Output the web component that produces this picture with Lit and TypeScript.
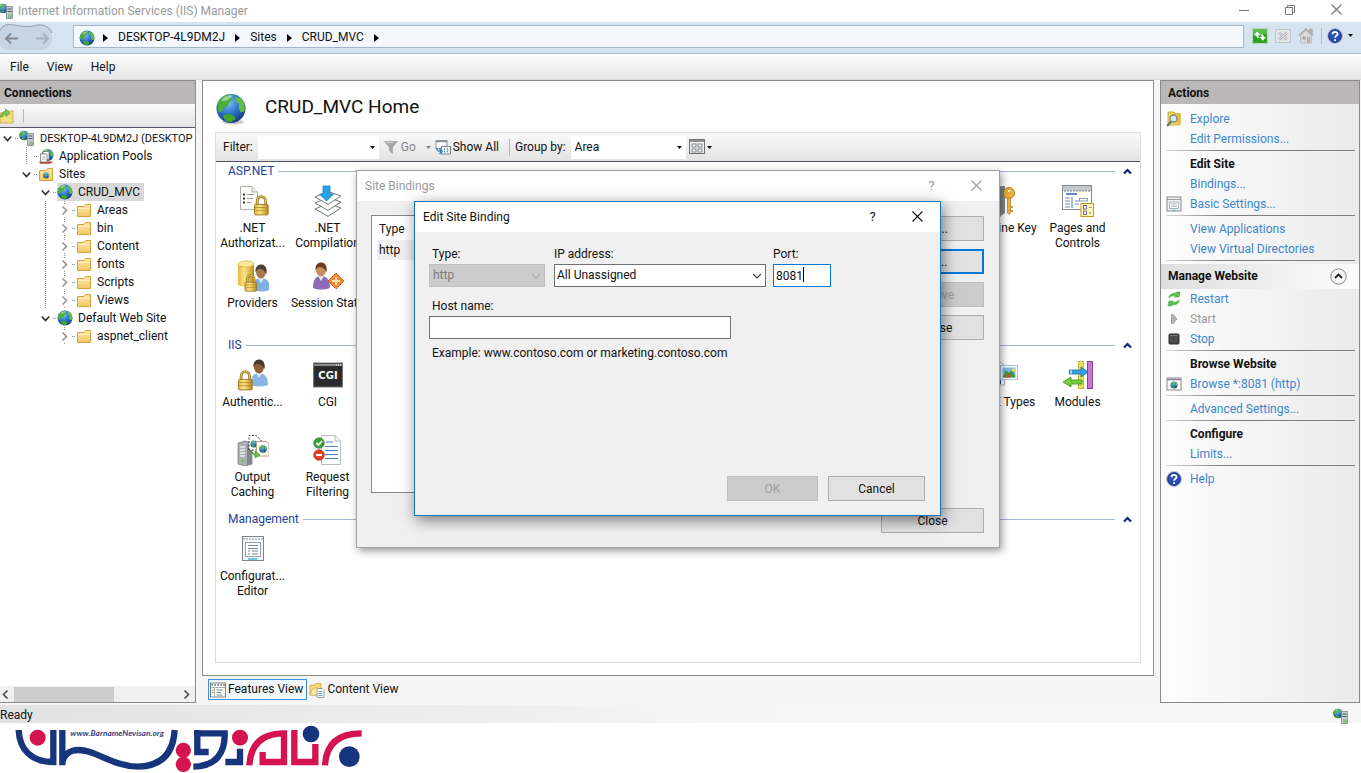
import { LitElement, html, svg, css, nothing, TemplateResult } from "lit";
import { customElement, property } from "lit/decorators.js";
import { classMap } from "lit/directives/class-map.js";

/* ---------- icon artwork ---------- */

const globe = (cx: number, cy: number, r: number) => svg`
  <g transform="translate(${cx} ${cy}) scale(${r / 8})">
    <circle r="8" fill="url(#sea)"/>
    <path d="M-7.4-3C-6-6-3-8 0-7.8L-.6-6.2 1.4-5.6-.6-3.6-2-1.2-4-.2-5.4 2.2-7 1.6Z" fill="#4cae3c"/>
    <path d="M2.6-6.4 5.4-5.8 7.4-2.6 7.6 1.4 5.6 2.4 4.2.2 4.4-2.6 2.4-4.2Z" fill="#5fbf3f"/>
    <path d="M-4.6 4 -1.6 2.6 1.6 4 2.6 5.8 0 7.6-3 7Z" fill="#43a52f"/>
    <path d="M-5.4-4.4A7 7 0 0 1 1-7.2C-.6-5.2-3-3.6-5.4-4.4Z" fill="#fff" opacity=".45"/>
  </g>`;

const lock = (x: number, y: number, s = 1) => svg`
  <g transform="translate(${x} ${y}) scale(${s})">
    <path d="M3 8V5a4 4.500 0 0 1 8 0V8" fill="none" stroke="#9a7a1c" stroke-width="2.600"/>
    <path d="M3 8V5a4 4.500 0 0 1 8 0V8" fill="none" stroke="#e7cf74" stroke-width="1"/>
    <rect x=".5" y="8" width="13" height="10" rx="1" fill="url(#gold)" stroke="#8d6a12" stroke-width=".8"/>
    <path d="M1 11H13M1 14H13" stroke="#a8811e" stroke-width=".7"/>
  </g>`;

const person = (x: number, y: number, shirt: string, hair: string, skin: string) => svg`
  <g transform="translate(${x} ${y})">
    <path d="M0 26C0 17 3 14 8 14S17 17 17 26C11 28 5 28 0 26Z" fill="${shirt}"/>
    <path d="M5 14 8 19 11 14Z" fill="#e8eef8"/>
    <ellipse cx="8" cy="8" rx="5" ry="6.500" fill="${skin}"/>
    <path d="M2.500 8C2 2 6 0 9 .5S14.500 4 13.500 10C12 7 10 5 6 5 4 5.500 3.500 7 2.500 8Z" fill="${hair}"/>
  </g>`;

const tower = (x: number, y: number) => svg`
  <g transform="translate(${x} ${y})">
    <path d="M0 2 7 0 14 2V23L7 25 0 23Z" fill="#a9b0b4" stroke="#6e767b" stroke-width=".7"/>
    <path d="M9 3.500 14 2V23L9 24.500Z" fill="#7f888e"/>
    <path d="M2 6H7M2 9H7M2 12H7M2 15H7" stroke="#e9eef0" stroke-width="1.300"/>
    <circle cx="4.500" cy="20" r="1.300" fill="#69d04c"/>
  </g>`;

const art: Record<string, [number, TemplateResult]> = {
  globe: [16, svg`${globe(8, 8, 7.5)}`],
  globeBig: [32, svg`<ellipse cx="18" cy="29" rx="11" ry="2.500" fill="#ccc"/>${globe(16, 15.5, 14.5)}`],
  server: [16, svg`${globe(5, 5.5, 4.8)}
    <rect x="8.500" y="3.500" width="6" height="12" fill="#c4ccd0" stroke="#7f8b92" stroke-width=".8"/>
    <path d="M9.500 6H13.500M9.500 8.500H13.500" stroke="#4d5a62"/><rect x="10" y="11.500" width="4" height="3.500" fill="#8abf8a"/>`],
  pools: [16, svg`${globe(9.5, 7, 6)}
    <path d="M1 13.500 15.500 13.500 12 15.700H2Z" fill="#c5342d"/>
    <rect x="5" y="3.500" width="6" height="8" fill="#fff" stroke="#777" stroke-width=".8"/>
    <rect x="2.500" y="6" width="6.500" height="8" fill="#fff" stroke="#777" stroke-width=".8"/>
    <path d="M4 9H7.500M4 11H7.500" stroke="#999" stroke-width=".8"/>`],
  folder: [16, svg`<path d="M1.500 4.500H8L9.500 2.500H14.500V14.500H1.500Z" fill="url(#paper)" stroke="#d5a13c"/>
    <path d="M2 6.500H14" stroke="#fff3c4"/>`],
  sites: [16, svg`<path d="M1.500 4.500H8L9.500 2.500H14.500V14.500H1.500Z" fill="url(#paper)" stroke="#d5a13c"/>${globe(8, 9.5, 3)}`],
  connect: [16, svg`<path d="M1 5H7L8.500 3H14V15H1Z" fill="#f3dc82" stroke="#cfa849" stroke-width=".8"/>
    <path d="M1.500 9C2 5 4 3.500 6.500 3.500V1L11 5 7 8.500V6C5 6 4 7 3.500 9Z" fill="#7cc84a" stroke="#3d8f28" stroke-width=".6"/>`],
  refresh: [16, svg`<rect x=".5" y=".5" width="15" height="15" rx="1" fill="#2fa324" stroke="#bcd8ba"/><path d="M1 1H15V6C10 5 5 8 1 7Z" fill="#7fce72" opacity=".6"/>
    <path d="M5.200 3.500 8.500 7.300H6.300C6.300 8.800 6.800 9.400 8 10 5.500 10.300 4.200 9.300 4.200 7.300H2Z" fill="#fff"/>
    <path d="M10.800 12.800 7.500 9H9.700C9.700 7.500 9.200 6.900 8 6.300 10.500 6 11.800 7 11.800 9H14Z" fill="#fff"/>`],
  stopNav: [16, svg`<rect x=".5" y="1.500" width="15" height="13" fill="#e3e4e6" stroke="#c3c5c8"/>
    <path d="M4 5 12 11.500M12 5 4 11.500" stroke="#b1b3b6" stroke-width="2.400"/><path d="M4 5 12 11.500M12 5 4 11.500" stroke="#eee" stroke-width=".8"/>`],
  home: [16, svg`<path d="M1 7.500 8 1 15 7.500M12 4V1.500H14V6" fill="none" stroke="#a9a9a9" stroke-width="1.500"/>
    <path d="M2.500 7.500 8 2.500 13.500 7.500V15H2.500Z" fill="#dadada" stroke="#b4b4b4" stroke-width=".8"/>
    <rect x="4.500" y="8.500" width="3" height="3" fill="#a2a2a2"/><rect x="9" y="9" width="3" height="6" fill="#b0b0b0"/>`],
  help: [16, svg`<circle cx="8" cy="8" r="7.300" fill="#2b4fb3" stroke="#b5bccb" stroke-width="1.200"/>
    <circle cx="8" cy="8" r="6.300" fill="none" stroke="#142f86" stroke-width=".8"/>
    <path d="M5.500 6.300C5.500 3.200 10.600 3.200 10.600 6 10.600 8 8.100 7.700 8.100 9.800M8.100 11.200V13" fill="none" stroke="#fff" stroke-width="1.800"/>`],
  explore: [16, svg`<path d="M2 1H8L9 2.500H14V14H2Z" fill="#f4d65c" stroke="#c79d2b" stroke-width=".8"/><rect x="10.500" y="2" width="4" height="10" fill="#e7b93a"/>
    <circle cx="7.500" cy="7.500" r="3.500" fill="#dceaf7" stroke="#7c858e" stroke-width="1.300"/><path d="M5 10.500 1.200 15" stroke="#666e76" stroke-width="2"/>`],
  settings: [16, svg`<rect x="1" y="1" width="14" height="14" fill="#f1f2f3" stroke="#84888c"/>
    <path d="M1 3.500H15" stroke="#9a9ea2"/><rect x="3.500" y="6" width="9" height="6.500" fill="#fff" stroke="#9aa0a6" stroke-width=".8"/>
    <path d="M5 8H11M5 10.200H11" stroke="#8d949b" stroke-width=".8"/><path d="M6 14.200H10" stroke="#55c0d0"/>`],
  restart: [16, svg`<path d="M3 7C3 3.500 6 2 9 2.500L10.500 1 14 1 13 6 8.500 6 10 4.600C7 4.300 5 5 3 7Z" fill="#5cc452" stroke="#2f9a2c" stroke-width=".5"/>
    <path d="M13 9C13 12.500 10 14 7 13.500L5.500 15 2 15 3 10 7.500 10 6 11.400C9 11.700 11 11 13 9Z" fill="#5cc452" stroke="#2f9a2c" stroke-width=".5"/>`],
  start: [16, svg`<path d="M5.500 3.500H7L11 8 7 12.500H5.500Z" fill="#b1b1b1" stroke="#929292" stroke-width=".8"/>`],
  stop: [16, svg`<rect x="3" y="3" width="10" height="10" rx="1" fill="#4b4b4b" stroke="#2a2a2a"/><path d="M4 4.500H12" stroke="#777"/>`],
  browse: [16, svg`<rect x="1" y="2" width="14" height="12" fill="#fff" stroke="#8e8494"/><path d="M1 3.500H15" stroke="#8a7fa2" stroke-width="1.500"/>${globe(8, 9, 3.5)}`],
  funnel: [16, svg`<path d="M1.500 2.500H14.500L9.500 8.500V14.500L6.500 12V8.500Z" fill="#a6a6a6" stroke="#9d9d9d" stroke-width=".6"/><path d="M3.500 3.500H10" stroke="#d5d5d5"/>`],
  showAll: [16, svg`<rect x="1" y="1.500" width="11" height="8" fill="#fff" stroke="#8b9298"/><path d="M1 2.500H12" stroke="#8b9298" stroke-width="1.500"/>
    <rect x="6.500" y="7.500" width="9" height="7.500" fill="#eef4fa" stroke="#7c8790"/><path d="M9 10H10M12 10H13M9 12.500H10M12 12.500H13" stroke="#3b7cc4" stroke-width="1.300"/>
    <path d="M1.500 9C2 12 4 12.500 6 12.500M4.500 10 7 12.500 4.500 15" fill="none" stroke="#2b86d0" stroke-width="1.500"/>`],
  views: [16, svg`<rect x=".5" y=".5" width="15" height="14" fill="#f5f5f5" stroke="#6e7072"/><path d="M1 2H15" stroke="#8f9294" stroke-width="2"/>
    <g fill="#fff" stroke="#7d8286"><rect x="3" y="5" width="4" height="3"/><rect x="9" y="5" width="4" height="3"/><rect x="3" y="10" width="4" height="3"/><rect x="9" y="10" width="4" height="3"/></g>`],
  features: [16, svg`<rect x=".5" y="1" width="15" height="14" fill="#fff" stroke="#7e8184"/><path d="M1 3H15" stroke="#a2a5a8" stroke-width="2" stroke-dasharray="2 1"/>
    <path d="M4.500 5V15M1 5.500H15" stroke="#a9aeb2"/><path d="M6.500 8H12.500M6.500 10.500H11M6.500 13H12.500M2 8H3.500M2 10.500H3.500" stroke="#6f8f72"/>`],
  content: [16, svg`<path d="M1 3H6L7 1.500H12V13H1Z" fill="#f6d978" stroke="#cfa343" stroke-width=".8"/><path d="M1 13 4 6H9V13Z" fill="#fbe9a6" stroke="#cfa343" stroke-width=".6"/>
    <path d="M8 6.500H13L15 8.500V15.500H8Z" fill="#fff" stroke="#7e8a94" stroke-width=".8"/><path d="M9.500 9.500H13.500M9.500 11.500H13.500M9.500 13.500H13.500" stroke="#4f90c8" stroke-width=".8"/>`],
  authorization: [32, svg`<path d="M3.500 1.500H15L20.500 7V24.500H3.500Z" fill="#fcfcfa" stroke="#b3b3ab"/><path d="M15 1.500V7H20.500" fill="#eee" stroke="#b3b3ab"/>
    <g stroke="#333" stroke-width="2"><path d="M6 9.500H8M6 13.500H8M6 17.500H8"/></g><path d="M10 9.500H17M10 13.500H16M10 17.500H14" stroke="#999"/>${lock(17, 11, 1.05)}`],
  compilation: [32, svg`<g fill="#fff" stroke="#6f777d"><path d="M3 24 16 18.500 29 23 16 31.300Z"/><path d="M3 18 16 12.500 29 17 16 25.300Z"/><path d="M3 12 16 6.500 29 11 16 19.300Z"/></g>
    <path d="M11 1H18V9H21.500L14.500 16 7.500 9H11Z" fill="#27a3e4" stroke="#1878b4" stroke-width=".8"/>`],
  providers: [32, svg`${person(16, 4, "#7fb0e2", "#4a4038", "#a8794f")}
    <path d="M1 4V24C1 28 17 28 17 24V4Z" fill="url(#gold)"/><ellipse cx="9" cy="4" rx="8" ry="3" fill="#fbe9a0" stroke="#d9a72a" stroke-width=".7"/>${lock(7.5, 15, 0.9)}`],
  session: [32, svg`${person(1, 2, "#8d6bb8", "#6d3a1e", "#c68d63")}
    <path d="M24 13 32 21 24 29 16 21Z" fill="#f08a2c" stroke="#c4451c" stroke-dasharray="2 1"/><path d="M24 17V25M20 21H28" stroke="#ffe3b8" stroke-width="2"/>`],
  authentication: [32, svg`${person(14, 0, "#8ab6e6", "#463c36", "#8f6038")}${lock(1, 12, 1.05)}`],
  cgi: [32, svg`<rect x="1.500" y="4" width="29" height="24" fill="#2b2b2b" stroke="#777"/><path d="M2 6H30" stroke="#8a8a8a" stroke-width="2"/><path d="M24 6H29" stroke="#fff" stroke-dasharray="1 1"/>
    <text x="16" y="20" text-anchor="middle" class="cgi-text">CGI</text>`],
  caching: [32, svg`${tower(1, 7)}<path d="M12 16V1.500H19L24 6V16Z" fill="#fff" stroke="#333" stroke-dasharray="2 1.500"/>${globe(17, 10, 3.5)}
    <path d="M19.500 7.500H29L32 10V22H19.500Z" fill="#fff" stroke="#c09a86"/>${globe(26, 15, 3.8)}<path d="M13 17 18 20V17L23 21 18 24V22Z" fill="#6abf3a" stroke="#3b8a1d" stroke-width=".6"/>`],
  filtering: [32, svg`<path d="M9.500 1.500H23L28.500 7V30.500H9.500Z" fill="#fff" stroke="#b8bec4"/><path d="M23 1.500V7H28.500" fill="#eee" stroke="#b8bec4"/>
    <path d="M14 8H21M13 12.500H26M13 16.500H26M13 20.500H26M13 24.500H26" stroke="#4a80c4" stroke-width="1.200"/>
    <circle cx="7" cy="9" r="5.300" fill="#3f9e3c" stroke="#2b7a2b" stroke-width=".6"/><path d="M4.500 9 6.500 11 10 7" fill="none" stroke="#fff" stroke-width="1.800"/>
    <circle cx="7" cy="21" r="5.300" fill="#de3c23" stroke="#a8240f" stroke-width=".6"/><path d="M4 21H10" stroke="#fff" stroke-width="2.200"/>`],
  config: [32, svg`<rect x="5.500" y="3.500" width="21" height="24" fill="#f4f6f7" stroke="#7b858c"/><path d="M6 6H26" stroke="#8d979e" stroke-dasharray="2 1"/>
    <rect x="8.500" y="9.500" width="15" height="14" fill="#fff" stroke="#9aa4ab"/><path d="M11 12.500H21M11 15.500H21M11 18H13M11 21H13M15 18H21M15 21H21" stroke="#7c878f"/><path d="M11 26H20" stroke="#37c0dc" stroke-width="1.500"/>`],
  machineKey: [32, svg`<path d="M3 1 14 3V32L3 27Z" fill="#a4adab"/><path d="M12 1.500 18 1V28L12 32Z" fill="#7f8a88"/>
    <circle cx="22" cy="8" r="5.500" fill="#f2b23b" stroke="#b77a17"/><circle cx="22" cy="6" r="1.800" fill="#fff6da" stroke="#b77a17" stroke-width=".6"/>
    <path d="M20.500 13H23.500V28L22 29.500 20.500 28Z" fill="#f2b23b" stroke="#b77a17" stroke-width=".7"/><path d="M23.500 22H26M23.500 26H26" stroke="#b77a17" stroke-width="1.500"/>`],
  pages: [32, svg`<rect x=".5" y=".5" width="29" height="24" fill="#fff" stroke="#808890"/><path d="M1 3.500H29" stroke="#c3c8cc" stroke-width="5"/><path d="M2 6H29" stroke="#737b82" stroke-dasharray="2 1"/>
    <path d="M4 9H15" stroke="#2d62b3" stroke-width="1.500"/><path d="M10 12V23" stroke="#3c78c8"/><path d="M3 13H8M3 16H8M3 19H8M3 22H8M13 16H17M13 19H17" stroke="#6a8fc4"/><rect x="17.500" y="13.500" width="8" height="2.500" fill="#fff" stroke="#6d88ad" stroke-width=".8"/>
    <rect x="19" y="18.500" width="12.500" height="13" fill="#fff6b8" stroke="#c99a16"/><rect x="21.500" y="20.500" width="3" height="3.500" fill="#fff" stroke="#5a4a8a" stroke-width=".8"/><rect x="21.500" y="26" width="3" height="3.500" fill="#fff" stroke="#5a4a8a" stroke-width=".8"/><path d="M27 22.500H29.500M27 28H29.500" stroke="#888"/>`],
  mime: [32, svg`<path d="M2.500 1.500H12L17.500 7V26H2.500Z" fill="#fff" stroke="#aab"/><path d="M10 8H14V25H10Z" fill="#274f9a"/>
    <rect x="13.500" y="6.500" width="17" height="14" fill="#fff" stroke="#b4c0cc"/><rect x="15.500" y="8.500" width="13" height="10" fill="#78b9ec"/><path d="M15.500 18.500 19 11 22 14 25 10 28.500 18.500Z" fill="#3d9a3f"/><circle cx="26" cy="11" r="1.800" fill="#f4d43b"/><path d="M18 18.500 21 14 24 18.500Z" fill="#d44c2a"/>`],
  modules: [32, svg`<rect x="16.500" y="2.500" width="5" height="27" fill="#e5e04e" stroke="#a39c1d" stroke-dasharray="2 1"/><rect x="25.500" y="2.500" width="5" height="27" fill="#c679cf" stroke="#8a3f94"/>
    <path d="M7 11H19V8L26 13 19 18V15H7Z" fill="#35a0e6" stroke="#1668a8" stroke-width=".8"/><path d="M6 11V15M9 11V15" stroke="#fff"/>
    <path d="M20 21H9V18L1 23 9 28V25H20Z" fill="#74cf3e" stroke="#3b8e1c" stroke-width=".8"/>`],
};

const icon = (name: string) => {
  const [size, body] = art[name];
  return html`<svg class="icon" width=${size} height=${size} viewBox="0 0 ${size} ${size}" aria-hidden="true">${body}</svg>`;
};

const gradients = html`<svg class="defs" width="0" height="0" aria-hidden="true"><defs>
  <radialGradient id="sea" cx=".4" cy=".3" r=".8"><stop offset="0" stop-color="#7fc4f4"/><stop offset=".5" stop-color="#2a6fcb"/><stop offset="1" stop-color="#12306f"/></radialGradient>
  <linearGradient id="gold"><stop offset="0" stop-color="#e9b83b"/><stop offset=".4" stop-color="#fbe48c"/><stop offset="1" stop-color="#c08a17"/></linearGradient>
  <linearGradient id="paper" x2="0" y2="1"><stop offset="0" stop-color="#fde9a9"/><stop offset="1" stop-color="#f3c768"/></linearGradient>
</defs></svg>`;

const closeX = html`<svg width="11" height="11" viewBox="0 0 11 11" aria-hidden="true"><path d="M.5.5 10.500 10.500M10.500.5.500 10.500" stroke="currentColor" stroke-width="1.100"/></svg>`;
const caretDown = html`<svg class="caret" width="5" height="3" viewBox="0 0 5 3" aria-hidden="true"><path d="M0 0H5L2.500 3Z" fill="currentColor"/></svg>`;
const crumbArrow = html`<svg width="5" height="8" viewBox="0 0 5 8" aria-hidden="true"><path d="M0 0 5 4 0 8Z"/></svg>`;
const chevronDown = html`<svg class="chev" width="10" height="7" viewBox="0 0 10 7" aria-hidden="true"><path d="M1 1 5 5 9 1" fill="none" stroke="currentColor" stroke-width="1.200"/></svg>`;

const base = css`
  :host { font: 12px/15px Roboto, "Open Sans", sans-serif; color: #111; box-sizing: border-box; }
  *, *::before, *::after { box-sizing: border-box; }
  button, input, select { font: inherit; color: inherit; margin: 0; padding: 0; border: 0; background: none; border-radius: 0; outline: 0; appearance: none; }
  a { color: #3b87cd; text-decoration: none; }
  svg { display: block; flex: none; }
  .defs { position: absolute; }
  .pane-title { height: 23px; padding: 2px 0 0 4px; display: flex; align-items: center; font-weight: 700; font-size: 12px; background: #b9b7b8; margin: 0; }
`;

/* ---------- connections tree ---------- */

interface Node { label: string; icon: string; level: number; open?: boolean; guides?: number[]; selected?: boolean; }

const folder = (label: string): Node => ({ label, icon: "folder", level: 3, open: false, guides: [2] });
const nodes: Node[] = [
  { label: "DESKTOP-4L9DM2J (DESKTOP", icon: "server", level: 0, open: true },
  { label: "Application Pools", icon: "pools", level: 1, guides: [1] },
  { label: "Sites", icon: "sites", level: 1, open: true },
  { label: "CRUD_MVC", icon: "globe", level: 2, open: true, selected: true },
  ...["Areas", "bin", "Content", "fonts", "Scripts", "Views"].map(folder),
  { label: "Default Web Site", icon: "globe", level: 2, open: true },
  { ...folder("aspnet_client"), guides: [] },
];

@customElement("connections-pane")
class ConnectionsPane extends LitElement {
  static styles = [base, css`
    :host { display: flex; flex-direction: column; background: #fff; border: 1px solid #8b8b8b; border-left: 0; min-width: 0; overflow: hidden; }
    .tools { height: 24px; display: flex; align-items: center; gap: 8px; border-bottom: 1px solid #53566b; background: linear-gradient(#fafafa, #e4e4e4); }
    .tools .icon { margin-left: -1px; }
    .tools i { width: 1px; height: 14px; background: #bdbba6; }
    ul { list-style: none; margin: 0; padding: 1px 0 0; flex: 1; }
    li { display: flex; align-items: center; height: 18px; white-space: nowrap; }
    .cell { width: 19px; height: 18px; flex: none; }
    .line { background: repeating-linear-gradient(#8c8c8c 0 1px, transparent 1px 2px) 7px 0 / 1px 100% no-repeat; }
    .twist { width: 15px; height: 18px; flex: none; display: grid; place-items: center; color: #333; }
    .twist svg { background: #fff; }
    .shut { color: #999; }
    .dots { width: 4px; height: 1px; flex: none; background: repeating-linear-gradient(90deg, #8c8c8c 0 1px, transparent 1px 2px); }
    .name { padding: 2px 4px 1px 5px; height: 18px; }
    .server { font-size: 11px; padding-right: 0; }
    .node { display: flex; align-items: center; }
    .selected { background: #d9d9d9; }
    .scroll { height: 16px; background: #f0f0f0; display: flex; align-items: center; justify-content: space-between; padding: 0 5px 0 2px; }
    .thumb { width: 100px; height: 15px; background: #cdcdcd; }
    .track { flex: 1; padding-left: 5px; }
  `];
  render() {
    const twisty = (open: boolean) => html`<svg width="9" height="11" viewBox="0 0 9 11" aria-hidden="true"><path d=${open ? "M.8 3.500 4.500 7.500 8.200 3.500" : "M2.500 1.500 6.500 5.500 2.500 9.500"} fill="none" stroke="currentColor" stroke-width="1.700"/></svg>`;
    return html`${gradients}
      <h2 class="pane-title">Connections</h2>
      <div class="tools">${icon("connect")}<i></i></div>
      <ul>${nodes.map(n => html`<li>
        ${Array.from({ length: n.level }, (_, i) => html`<span class=${classMap({ cell: true, line: !!n.guides?.includes(i) })}></span>`)}
        <span class=${classMap({ twist: true, shut: !n.open, line: !n.open })}>${n.open === undefined ? nothing : twisty(n.open)}</span>
        <span class="dots"></span>
        <span class=${classMap({ node: true, selected: !!n.selected })}>${icon(n.icon)}<span class=${classMap({ name: true, server: n.level === 0 })}>${n.label}</span></span>
      </li>`)}</ul>
      <div class="scroll">
        <svg width="7" height="9" viewBox="0 0 7 9"><path d="M5.500.5 1.500 4.500 5.500 8.500" fill="none" stroke="#444" stroke-width="1.500"/></svg>
        <div class="track"><div class="thumb"></div></div>
        <svg width="7" height="9" viewBox="0 0 7 9"><path d="M1.500.5 5.500 4.500 1.500 8.500" fill="none" stroke="#444" stroke-width="1.500"/></svg>
      </div>`;
  }
}

/* ---------- features home ---------- */

interface Feature { lines: string[]; icon: string; late?: boolean; }
const groups: { title: string; features: Feature[] }[] = [
  { title: "ASP.NET", features: [
    { lines: [".NET", "Authorizat..."], icon: "authorization" },
    { lines: [".NET", "Compilation"], icon: "compilation" },
    { lines: ["Machine Key"], icon: "machineKey", late: true },
    { lines: ["Pages and", "Controls"], icon: "pages" },
    { lines: ["Providers"], icon: "providers" },
    { lines: ["Session State"], icon: "session" },
  ] },
  { title: "IIS", features: [
    { lines: ["Authentic..."], icon: "authentication" },
    { lines: ["CGI"], icon: "cgi" },
    { lines: ["MIME Types"], icon: "mime", late: true },
    { lines: ["Modules"], icon: "modules" },
    { lines: ["Output", "Caching"], icon: "caching" },
    { lines: ["Request", "Filtering"], icon: "filtering" },
  ] },
  { title: "Management", features: [{ lines: ["Configurat...", "Editor"], icon: "config" }] },
];

@customElement("features-home")
class FeaturesHome extends LitElement {
  static styles = [base, css`
    :host { display: flex; flex-direction: column; background: #fff; border: 1px solid #8b8b8b; padding: 10px 12px 12px; min-width: 0; }
    header { display: flex; align-items: center; gap: 18px; height: 36px; }
    h1 { margin: 0; font-size: 19px; line-height: 24px; font-weight: 400; padding: 0 0 4px; }
    .box { flex: 1; margin: 5px 0 0; border: 1px solid #dcdcdc; min-width: 0; }
    .tools { height: 29px; display: flex; align-items: center; padding: 0 7px; background: linear-gradient(#fafafa, #e3e3e3); border-bottom: 1px solid #4d5068; }
    .combo { position: relative; display: flex; align-items: center; height: 23px; background: #fff; }
    .combo .caret { position: absolute; right: 4px; }
    .filter { width: 121px; margin: 0 4px 0 5px; }
    .filter input { width: 100%; height: 100%; }
    .area { width: 115px; margin: 0 3px 0 5px; }
    .area select { width: 100%; height: 100%; padding-left: 4px; }
    .tools button { display: flex; align-items: center; gap: 2px; }
    .go { color: #8a8a8a; width: 48px; margin-right: 4px; }
    .go .caret { margin-left: auto; }
    .bar { width: 1px; height: 17px; margin: 0 5px 0 10px; background: #b9b8a2; }
    h2 { display: flex; align-items: center; gap: 4px; margin: 0; height: 20px; padding: 0 8px 2px 12px; font-size: 12px; line-height: 15px; font-weight: 400; color: #20409a; }
    h2 i { flex: 1; height: 1px; background: #a9b7d6; }
    h2 svg { margin-left: 4px; }
    .grid { display: grid; grid-template-columns: repeat(12, 75px); grid-auto-rows: 75px; margin-left: -1px; padding-bottom: 4px; }
    .late { grid-column: 11; }
    figure { margin: 0; padding-top: 3px; display: flex; flex-direction: column; align-items: center; gap: 4px; text-align: center; white-space: nowrap; }
    figcaption span { display: block; }
    .cgi-text { font: 700 10px "DejaVu Sans", sans-serif; fill: #fff; }
  `];
  render() {
    return html`${gradients}
      <header>${icon("globeBig")}<h1>CRUD_MVC Home</h1></header>
      <div class="box">
        <div class="tools">
          <label for="filter">Filter:</label>
          <div class="combo filter"><input id="filter" type="text">${caretDown}</div>
          <button class="go">${icon("funnel")}Go${caretDown}</button>
          <button>${icon("showAll")}Show All</button>
          <i class="bar"></i>
          <label for="group">Group by:</label>
          <div class="combo area"><select id="group"><option>Area</option></select>${caretDown}</div>
          <button aria-label="Views">${icon("views")}${caretDown}</button>
        </div>
        ${groups.map(g => html`<section>
          <h2>${g.title}<i></i><svg width="9" height="7" viewBox="0 0 9 7"><path d="M1 5.500 4.500 2 8 5.500" fill="none" stroke="#17247c" stroke-width="2.200"/></svg></h2>
          <div class="grid">${g.features.map(f => html`<figure class=${classMap({ late: !!f.late })}>${icon(f.icon)}<figcaption>${f.lines.map(l => html`<span>${l}</span>`)}</figcaption></figure>`)}</div>
        </section>`)}
      </div>`;
  }
}

/* ---------- actions ---------- */

type Action = { label: string; icon?: string; kind?: "head" | "off" | "rule" | "band" };
const rule: Action = { label: "", kind: "rule" };
const actions: Action[] = [
  { label: "Explore", icon: "explore" }, { label: "Edit Permissions..." }, rule,
  { label: "Edit Site", kind: "head" }, { label: "Bindings..." }, { label: "Basic Settings...", icon: "settings" }, rule,
  { label: "View Applications" }, { label: "View Virtual Directories" }, rule,
  { label: "Manage Website", kind: "band" },
  { label: "Restart", icon: "restart" }, { label: "Start", icon: "start", kind: "off" }, { label: "Stop", icon: "stop" }, rule,
  { label: "Browse Website", kind: "head" }, { label: "Browse *:8081 (http)", icon: "browse" }, rule,
  { label: "Advanced Settings..." }, rule,
  { label: "Configure", kind: "head" }, { label: "Limits..." }, rule,
  { label: "Help", icon: "help" },
];

@customElement("actions-pane")
class ActionsPane extends LitElement {
  static styles = [base, css`
    :host { display: block; border: 1px solid #8b8b8b; background: linear-gradient(90deg, #fdfdfd, #ebebeb); }
    .pane-title { padding-left: 7px; }
    .list { padding: 5px 4px 0 5px; }
    .row { display: grid; grid-template-columns: 16px 1fr; gap: 8px; align-items: center; height: 20px; }
    .row > :last-child { grid-column: 2; }
    .head { font-weight: 700; margin: 0; font-size: 12px; }
    .off { color: #9b9b9b; }
    .rule { height: 1px; margin: 1px 0 3px; border: 0; background: linear-gradient(90deg, #d5d5d5, #808080 30%); }
    .band { height: 25px; display: flex; align-items: center; justify-content: space-between; margin: 0 -4px 0 -5px; padding: 0 12px 0 7px; background: linear-gradient(90deg, #dedede, #fafafa 90%); font-weight: 700; }
  `];
  render() {
    return html`${gradients}
      <h2 class="pane-title">Actions</h2>
      <div class="list">${actions.map(a => {
        if (a.kind === "rule") return html`<hr class="rule">`;
        if (a.kind === "band") return html`<div class="band">${a.label}<button aria-label="Collapse"><svg width="17" height="17" viewBox="0 0 17 17"><circle cx="8.500" cy="8.500" r="7.700" fill="#f6f6f6" stroke="#858585"/><path d="M5 10 8.500 6.500 12 10" fill="none" stroke="#222" stroke-width="1.800"/></svg></button></div>`;
        return html`<div class="row">${a.icon ? icon(a.icon) : nothing}${a.kind === "head" ? html`<h3 class="head">${a.label}</h3>` : a.kind === "off" ? html`<span class="off">${a.label}</span>` : html`<a href="#">${a.label}</a>`}</div>`;
      })}</div>`;
  }
}

/* ---------- dialogs ---------- */

const dialogStyles = css`
  :host { display: flex; flex-direction: column; background: #f0f0f0; }
  .title { height: 30px; display: flex; align-items: center; background: #fff; padding-left: 8px; }
  .title span { flex: 1; }
  .title button { width: 45px; height: 28px; margin-bottom: 2px; display: grid; place-items: center; font-size: 13px; }
  .btn { height: 25px; padding-top: 1px; background: #e1e1e1; border: 1px solid #adadad; }
  .btn:disabled { background: #cccccc; border-color: #bfbfbf; color: #a0a0a0; }
`;

@customElement("site-bindings")
class SiteBindings extends LitElement {
  static styles = [base, dialogStyles, css`
    :host { border: 1px solid #a0a0a0; box-shadow: 2px 3px 8px rgba(0, 0, 0, .4); }
    .title { color: #9a9a9a; }
    .body { flex: 1; padding: 14px 15px 14px 14px; display: grid; grid-template-columns: 1fr 103px; gap: 10px; }
    .list { height: 278px; border: 1px solid #828790; background: #fff; }
    table { border-collapse: collapse; width: 100%; }
    th, td { text-align: left; font-weight: 400; padding: 0 7px; }
    th { height: 24px; padding-top: 2px; }
    td { height: 20px; }
    tbody tr { background: linear-gradient(#f0f0f0, #f0f0f0) 5px 0 no-repeat; }
    .side { display: flex; flex-direction: column; gap: 8px; padding-top: 1px; }
    .main { border: 2px solid #0078d7; }
    .close { margin-top: auto; }
  `];
  render() {
    return html`
      <div class="title"><span>Site Bindings</span><button aria-label="Help">?</button><button aria-label="Close">${closeX}</button></div>
      <div class="body">
        <div class="list"><table><thead><tr><th>Type</th></tr></thead><tbody><tr><td>http</td></tr></tbody></table></div>
        <div class="side">
          <button class="btn">Add...</button><button class="btn main">Edit...</button>
          <button class="btn" disabled>Remove</button><button class="btn">Browse</button>
          <button class="btn close">Close</button>
        </div>
      </div>`;
  }
}

@customElement("edit-binding")
class EditBinding extends LitElement {
  @property() port = "8081";
  static styles = [base, dialogStyles, css`
    :host { border: 1px solid #1874b8; box-shadow: 2px 4px 14px rgba(0, 0, 0, .5); }
    .body { flex: 1; padding: 15px 14px 14px; display: flex; flex-direction: column; }
    .fields { display: grid; grid-template-columns: 116px 212px 58px; column-gap: 9px; }
    .field { display: flex; flex-direction: column; gap: 2px; }
    .field label { padding-left: 3px; }
    .ip label, .port label { padding-left: 0; }
    .port { margin-left: -2px; width: 58px; }
    .wrap { position: relative; height: 23px; display: flex; }
    .wrap select, .wrap input { width: 100%; height: 23px; border: 1px solid #707070; background: #fff; padding: 0 2px; }
    .wrap select:disabled { background: #cccccc; border-color: #bfbfbf; color: #7d7d7d; padding: 0 3px; opacity: 1; }
    .wrap .chev { position: absolute; right: 4px; top: 9px; color: #444; }
    .wrap select:disabled + .chev { color: #aaa; }
    .port input { border-color: #0078d7; }
    .cursor { position: absolute; left: 30px; top: 3px; width: 1px; height: 15px; background: #000; }
    .host { margin-top: 12px; width: 302px; }
    p { margin: 7px 0 0 3px; }
    .foot { margin-top: auto; display: flex; justify-content: flex-end; gap: 10px; padding-right: 1px; }
    .ok { width: 91px; } .cancel { width: 97px; }
  `];
  render() {
    return html`
      <div class="title"><span>Edit Site Binding</span><button aria-label="Help">?</button><button aria-label="Close">${closeX}</button></div>
      <div class="body">
        <div class="fields">
          <div class="field"><label for="type">Type:</label><div class="wrap"><select id="type" disabled><option>http</option></select>${chevronDown}</div></div>
          <div class="field ip"><label for="ip">IP address:</label><div class="wrap"><select id="ip"><option>All Unassigned</option></select>${chevronDown}</div></div>
          <div class="field port"><label for="port">Port:</label><div class="wrap"><input id="port" type="text" .value=${this.port}><span class="cursor"></span></div></div>
        </div>
        <div class="field host"><label for="host">Host name:</label><div class="wrap"><input id="host" type="text"></div></div>
        <p>Example: www.contoso.com or marketing.contoso.com</p>
        <div class="foot"><button class="btn ok" disabled>OK</button><button class="btn cancel">Cancel</button></div>
      </div>`;
  }
}

/* ---------- window ---------- */

@customElement("app-root")
class AppRoot extends LitElement {
  static styles = [base, css`
    :host { display: flex; flex-direction: column; min-height: 100vh; position: relative; background: #fff; overflow: hidden; }
    .titlebar { height: 22px; display: flex; align-items: center; padding-right: 2px; color: #9a9a9a; }
    .titlebar > .icon { margin: 0 4px 0 -2px; }
    .titlebar span { flex: 1; }
    .titlebar button { width: 46px; height: 18px; margin-bottom: 3px; display: grid; place-items: center; color: #777; }
    .nav { height: 32px; display: flex; align-items: center; gap: 8px; padding-right: 8px; background: #d6e4f1; border-bottom: 1px solid #a9b9c9; }
    .history { width: 65px; }
    .crumbs { flex: 1; height: 23px; margin-bottom: 2px; display: flex; align-items: center; gap: 10px; padding: 2px 5px 0; background: #f3f8fe; border: 1px solid #a3b6ca; }
    .crumbs .icon { margin-right: -2px; }
    .navtools { display: flex; align-items: center; gap: 7px; margin-bottom: 4px; }
    .navtools button { display: flex; align-items: center; gap: 5px; }
    .navtools i { width: 1px; height: 16px; background: #b4c0cc; margin-right: -2px; }
    .menu { height: 26px; display: flex; align-items: center; gap: 18px; padding: 2px 0 0 10px; background: linear-gradient(#fff, #e5e5e5); border-bottom: 1px solid #ddd; }
    .work { flex: 1; display: grid; grid-template-columns: 196px minmax(0, 1fr) 200px; gap: 6px; background: #f5f5f5; padding: 0 1px 2px 0; }
    .center { display: flex; flex-direction: column; min-width: 0; }
    features-home { flex: 1; }
    .tabs { height: 27px; display: flex; align-items: center; gap: 1px; padding-left: 6px; }
    .tabs button { display: flex; align-items: center; gap: 2px; height: 21px; padding: 0 1px; }
    .tabs .on { border: 1px solid #3a8fde; background: #f3f8fd; padding: 0 3px 0 1px; }
    .status { height: 18px; display: flex; align-items: center; justify-content: space-between; padding: 3px 12px 0 0; background: linear-gradient(90deg, #e2e2e2, #f7f7f7 60%); }
    .logo { height: 50px; }
    .site-text { font: italic 700 25px Lato, sans-serif; fill: #33417f; }
    site-bindings { position: absolute; left: 356px; top: 170px; width: 644px; height: 378px; }
    edit-binding { position: absolute; left: 414px; top: 201px; width: 527px; height: 315px; }
  `];
  render() {
    return html`${gradients}
      <div class="titlebar">${icon("server")}<span>Internet Information Services (IIS) Manager</span>
        <button aria-label="Minimize"><svg width="10" height="10" viewBox="0 0 10 10"><path d="M0 5.500H10" stroke="currentColor"/></svg></button>
        <button aria-label="Restore"><svg width="10" height="10" viewBox="0 0 10 10"><path d="M.5 2.500H7.500V9.500H.5ZM2.500 2.500V.5H9.500V7.500H7.500" fill="none" stroke="currentColor"/></svg></button>
        <button aria-label="Close">${closeX}</button>
      </div>
      <nav class="nav">
        <svg class="history" width="65" height="30" viewBox="0 0 65 30" aria-hidden="true">
          <path d="M0 5C3 1 8 .5 14 1.500 24 4 32 4 38 1.500 48 1 52 6 52 14 52 22 48 27 40 27H8C4 27 2 25 0 22Z" fill="#c6d5e4"/>
          <path d="M0 8C3 1 8 1 14 2 24 4 32 4 38 2 46 1.500 50 5 52 10" fill="none" stroke="#93a0ae"/>
          <path d="M18 15.500H6M11 10.500 6 15.500 11 20.500" fill="none" stroke="#858b92" stroke-width="2"/>
          <path d="M36 15.500H48M43 10.500 48 15.500 43 20.500" fill="none" stroke="#a9b2bc" stroke-width="2"/>
        </svg>
        <div class="crumbs">${icon("globe")}${crumbArrow}<span>DESKTOP-4L9DM2J</span>${crumbArrow}<span>Sites</span>${crumbArrow}<span>CRUD_MVC</span>${crumbArrow}</div>
        <div class="navtools">
          <button aria-label="Refresh">${icon("refresh")}</button><button aria-label="Stop">${icon("stopNav")}</button><button aria-label="Home">${icon("home")}</button><i></i>
          <button aria-label="Help">${icon("help")}${caretDown}</button>
        </div>
      </nav>
      <div class="menu"><button>File</button><button>View</button><button>Help</button></div>
      <main class="work">
        <connections-pane></connections-pane>
        <div class="center">
          <features-home></features-home>
          <div class="tabs"><button class="on">${icon("features")}Features View</button><button>${icon("content")}Content View</button></div>
        </div>
        <actions-pane></actions-pane>
      </main>
      <div class="status"><span>Ready</span>${icon("server")}</div>
      <footer class="logo">
        <svg width="370" height="50" viewBox="0 159 1110 150">
          <g fill="none" stroke="#17357c" stroke-width="19">
            <path d="M56 180C58 240 96 276 160 276V180"/>
            <path d="M187 180V286M187 276C196 238 232 234 270 246 320 264 360 290 415 290 485 288 520 250 524 180"/>
            <path d="M592 180V246H626M582 190H674C676 245 650 290 580 290M676 276H720V236"/>
          </g>
          <g fill="none" stroke="#d5134f" stroke-width="19">
            <path d="M748 286C752 222 786 190 852 190V276H788V246"/>
            <path d="M883 180V276H946V222M975 286C978 222 1014 190 1085 190"/>
          </g>
          <g fill="#d5134f"><circle cx="113" cy="203" r="24"/><circle cx="550" cy="241" r="23"/><circle cx="550" cy="283" r="23"/><circle cx="720" cy="203" r="24"/></g>
          <g fill="#17357c"><circle cx="933" cy="192" r="25"/><circle cx="1048" cy="260" r="31"/></g>
          <text class="site-text" x="211" y="197">www.BarnameNevisan.org</text>
        </svg>
      </footer>
      <site-bindings></site-bindings>
      <edit-binding></edit-binding>`;
  }
}
